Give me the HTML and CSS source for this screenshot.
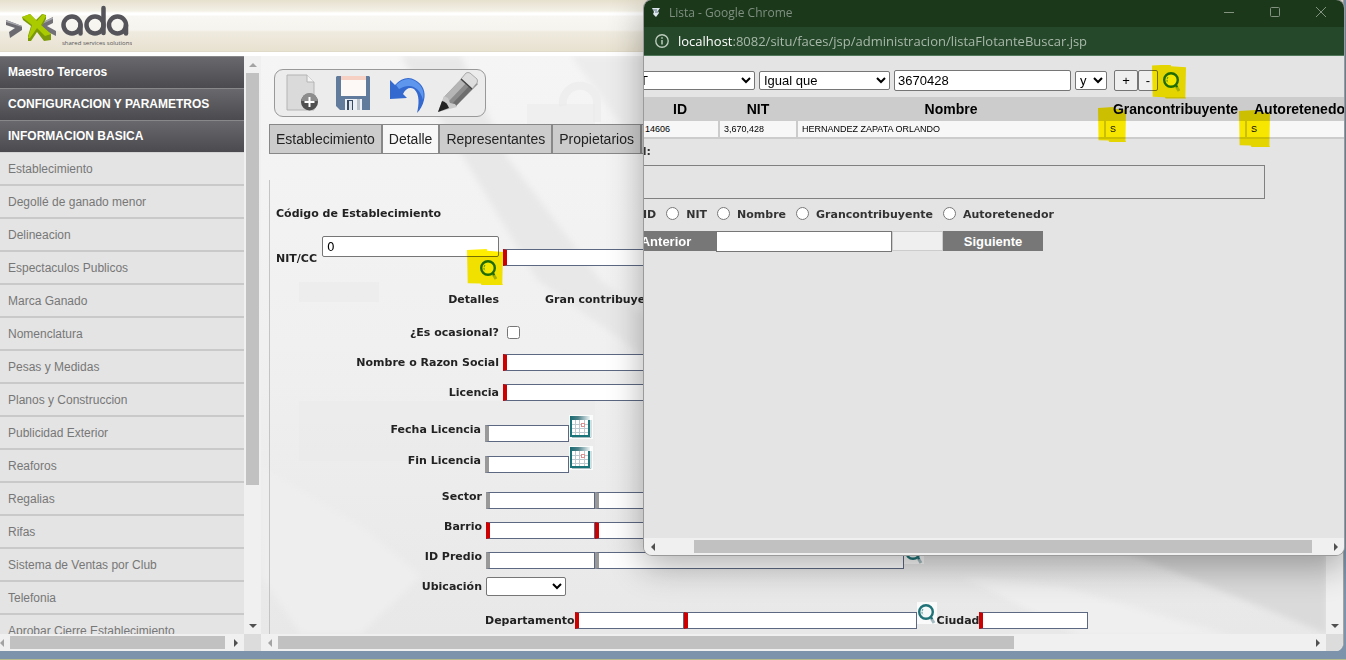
FILE: index.html
```
<!DOCTYPE html>
<html lang="es">
<head>
<meta charset="utf-8">
<title>Maestro Terceros</title>
<link rel="stylesheet" href="styles.css">
</head>
<body>
<svg class="defs" aria-hidden="true">
  <symbol id="search" viewBox="0 0 20 22">
    <path d="M14 16l3 5" stroke="#a4bcc0" stroke-width="3" fill="none"/>
    <circle cx="9" cy="10" r="6.8" fill="#f4f8f8" stroke="#1f7378" stroke-width="2.4"/>
    <path d="M6 7q-2 3 0 6" stroke="#6aa3a7" stroke-width="1.2" fill="none" stroke-dasharray="2 1"/>
    <path d="M13.500 15l2 2" stroke="#1f7378" stroke-width="2"/>
  </symbol>
  <symbol id="calendar" viewBox="0 0 24 24">
    <rect width="24" height="24" fill="#fafcfc"/>
    <path d="M1 2h21v20H1z" fill="#fff"/>
    <path d="M6.500 5v15M10.500 5v15M15.500 5v15M3 9.500h16M3 13.500h16M3 17.500h16" stroke="#bccad0" stroke-width="1"/>
    <path d="M2 3v18h18V4" fill="none" stroke="#197479" stroke-width="2"/>
    <path d="M3 22.500h19V5" fill="none" stroke="#a9bfc2"/>
    <rect x="1" y="1" width="20" height="4" fill="url(#calhead)"/>
    <rect x="12.500" y="8.500" width="3" height="3" fill="#fff" stroke="#e09090"/>
  </symbol>
  <linearGradient id="calhead"><stop offset="0" stop-color="#176a70"/><stop offset=".4" stop-color="#4c8088"/><stop offset="1" stop-color="#eef5f6"/></linearGradient>
</svg>
<div class="desktop">
  <div class="app">
    <header class="banner">
      <svg class="logo" width="132" height="48" viewBox="0 0 132 48" role="img" aria-label="ada shared services solutions">
        <path d="M6 20l16 6v4L10 38l-1-6 6-4-9-3z" fill="#6b6a71"/>
        <path d="M6 20l16 6v1L6 22z" fill="#a6a6ad"/>
        <path d="M53 17L39 24l1 4 16 8v-5l-9-5 6-3z" fill="#727178"/>
        <path d="M53 17L39 24l1 1 13-6z" fill="#a6a6ad"/>
        <path d="M22 17l8-3 6 6 6-6 4 1v4l-4 7 9 8v6l-7 1-7-9-6 9h-3v-5l3-10-8-6z" fill="#7c9a08"/>
        <path d="M22 17l8-3 7 7 6-7 3 2-5 9 10 9-6 2-8-8-7 10h-2l4-13z" fill="#a9cb00"/>
        <g fill="none" stroke="#55545a" stroke-width="4.500" stroke-linecap="round">
          <circle cx="72" cy="25" r="8.500"/><path d="M80.500 25v8.500"/>
          <circle cx="95" cy="25" r="8.500"/><path d="M103.500 8v25"/>
          <circle cx="117.500" cy="25" r="8.500"/><path d="M126 25v8.500"/>
        </g>
        <text x="62" y="45" font-size="6">shared services solutions</text>
      </svg>
    </header>
    <div class="workspace">
      <aside class="pane">
        <nav class="menu">
          <a class="head" href="#">Maestro Terceros</a>
          <a class="head" href="#">CONFIGURACION Y PARAMETROS</a>
          <a class="head" href="#">INFORMACION BASICA</a>
          <div class="items">
            <a class="item" href="#">Establecimiento</a>
            <a class="item" href="#">Degollé de ganado menor</a>
            <a class="item" href="#">Delineacion</a>
            <a class="item" href="#">Espectaculos Publicos</a>
            <a class="item" href="#">Marca Ganado</a>
            <a class="item" href="#">Nomenclatura</a>
            <a class="item" href="#">Pesas y Medidas</a>
            <a class="item" href="#">Planos y Construccion</a>
            <a class="item" href="#">Publicidad Exterior</a>
            <a class="item" href="#">Reaforos</a>
            <a class="item" href="#">Regalias</a>
            <a class="item" href="#">Rifas</a>
            <a class="item" href="#">Sistema de Ventas por Club</a>
            <a class="item" href="#">Telefonia</a>
            <a class="item" href="#">Aprobar Cierre Establecimiento</a>
          </div>
        </nav>
        <div class="vbar"><i class="arrow up dim"></i><b class="thumb side-v"></b><i class="arrow down"></i></div>
        <div class="hbar clipped"><i class="arrow left dim"></i><b class="thumb side-h"></b><i class="arrow right"></i></div>
        <div class="corner"></div>
      </aside>
      <section class="pane">
        <main class="content">
          <svg class="backdrop" viewBox="0 0 1065 578" preserveAspectRatio="none" aria-hidden="true">
            <defs>
              <filter id="soft"><feGaussianBlur stdDeviation="3"/></filter>
              <linearGradient id="base" x2="0" y2="1"><stop offset="0" stop-color="#f5f5f5"/><stop offset=".5" stop-color="#f0f0f0"/><stop offset="1" stop-color="#e8e8e8"/></linearGradient>
            </defs>
            <rect width="1065" height="578" fill="url(#base)"/>
            <g filter="url(#soft)">
              <path d="M140 0h60l46 101 93 123 50 40v40l-113-80-74-123z" fill="#e8e8e8"/>
              <path d="M310 0h80v110z" fill="#ececec"/>
              <path d="M0 410l100 60 60 50-60 58H40L0 520z" fill="#eeeeee"/>
              <path d="M850 490l216 88V480z" fill="#dadada"/>
              <path d="M700 520l100 10 170 50H820z" fill="#efefef"/>
            </g>
            <path d="M302 50a16 16 0 0 1 34-6v22" fill="none" stroke="#eeeeee" stroke-width="8"/>
            <path d="M38 226h80v20H38zM38 345h296v60H38zM266 48h68v22h-68z" fill="#eaeaea" fill-opacity=".5"/>
          </svg>
          <div class="tools">
            <button aria-label="Nuevo"><svg width="54" height="46" viewBox="0 0 54 46"><path d="M12 5h20l7 7v28H12z" fill="#dadada" stroke="#b4b4b4"/><path d="M32 5v7h7" fill="#f4f4f4" stroke="#b4b4b4"/><circle cx="34.500" cy="32" r="8.500" fill="#505050"/><path d="M26.500 31a8 8 0 0 1 16 0z" fill="#8d8d8d"/><path d="M34.500 27v10M29.500 32h10" stroke="#fff" stroke-width="2"/></svg></button>
            <button aria-label="Guardar"><svg width="54" height="46" viewBox="0 0 54 46"><path d="M8 6h32l1 1v33H11l-4-4V7z" fill="#617b9c"/><rect x="12" y="6" width="25" height="20" fill="#fdf9f7"/><path d="M12 6h25v4H12z" fill="#f6d0c2"/><rect x="16" y="29" width="17" height="11" fill="#eceff3"/><rect x="18" y="30" width="6" height="10" fill="#344a66"/><rect x="20" y="31" width="3" height="9" fill="#dfe4ea"/><path d="M29.500 29v11" stroke="#b8c0ca" stroke-width="3"/></svg></button>
            <button aria-label="Deshacer"><svg width="54" height="46" viewBox="0 0 54 46"><path d="M7 10l5 5C18 8 26 6 32 10c8 4 11 12 9 20-1 5-4 10-7 13 2-8 3-19-3-24-4-2-8-1-11 5l4 4-17 1z" fill="#3469cf"/><path d="M13 15C19 9 26 7 32 11c7 4 10 11 8 19C37 18 28 12 16 19z" fill="#5d96ec"/></svg></button>
            <button aria-label="Editar"><svg width="50" height="46" viewBox="0 0 50 46"><path d="M1 42l6-15 22-23 12 10-22 22z" fill="#8b8b8b"/><path d="M7 27L27 6l5 4-21 22z" fill="#b5b5b5"/><path d="M15 34l21-22 3 3-20 21z" fill="#6e6e6e"/><path d="M1 42l6-16 4 2 2 5 5 1 2 3z" fill="#c9c9c9"/><path d="M1 42l4-11q5 1 7 7z" fill="#222"/><path d="M24 9l5-6q2-1 4 0l7 6q1 2 0 4l-5 6z" fill="#dedede" stroke="#aaa"/><path d="M24 9l11 10" stroke="#444" stroke-width="1.500"/></svg></button>
          </div>
          <div class="tabs">
            <button>Establecimiento</button><button class="on">Detalle</button><button>Representantes</button><button>Propietarios</button><button class="more" aria-label="Más"></button>
          </div>
          <form class="form">
            <div class="row code"><label for="cod">Código de Establecimiento</label></div>
            <div class="row nit">
              <label for="nit">NIT/CC</label>
              <input id="cod" class="plain" value="0">
              <input id="nit" class="field must long">
              <button type="button" class="lookup" aria-label="Buscar"><svg width="20" height="22"><use href="#search"/></svg><span class="mark"></span></button>
            </div>
            <div class="row mid"><span class="cap">Detalles</span><span class="next">Gran contribuyente</span></div>
            <div class="row mid check"><label class="cap" for="oc">¿Es ocasional?</label><input id="oc" type="checkbox"></div>
            <div class="row mid"><label class="cap" for="nom">Nombre o Razon Social</label><input id="nom" class="field must long"></div>
            <div class="row mid"><label class="cap" for="lic">Licencia</label><input id="lic" class="field must long"></div>
            <div class="dates">
              <div class="row date"><label class="cap" for="fl">Fecha Licencia</label><input id="fl" class="field short"><button type="button" class="icon" aria-label="Calendario"><svg width="24" height="24"><use href="#calendar"/></svg></button></div>
              <div class="row date"><label class="cap" for="ff">Fin Licencia</label><input id="ff" class="field short"><button type="button" class="icon" aria-label="Calendario"><svg width="24" height="24"><use href="#calendar"/></svg></button></div>
            </div>
            <div class="row"><label class="cap" for="se">Sector</label><input id="se" class="field key"><input aria-label="Sector" class="field desc"></div>
            <div class="row"><label class="cap" for="ba">Barrio</label><input id="ba" class="field key must"><input aria-label="Barrio" class="field desc must"></div>
            <div class="row"><label class="cap" for="pr">ID Predio</label><input id="pr" class="field key"><input aria-label="ID Predio" class="field desc"><button type="button" class="icon" aria-label="Buscar"><svg width="20" height="22"><use href="#search"/></svg></button></div>
            <div class="row"><label class="cap" for="ub">Ubicación</label><select id="ub"><option></option></select></div>
            <div class="row place"><label for="de">Departamento</label><input id="de" class="field key must"><input aria-label="Departamento" class="field name must"><button type="button" class="icon" aria-label="Buscar"><svg width="20" height="22"><use href="#search"/></svg></button><label for="ci">Ciudad</label><input id="ci" class="field key must"></div>
          </form>
        </main>
        <div class="vbar"><i class="arrow up"></i><i class="arrow down"></i></div>
        <div class="hbar"><i class="arrow left dim"></i><b class="thumb main-h"></b><i class="arrow right"></i></div>
        <div class="corner"></div>
      </section>
    </div>
  </div>

  <div class="popup">
    <div class="titlebar">
      <svg width="10" height="11" viewBox="0 0 10 11"><path d="M1 1h8l-2 3 1 2-3 4-3-3 1-2z" fill="#dfe7ee"/><path d="M2 3h4M4 5h3" stroke="#5c6f80"/></svg>
      <span>Lista - Google Chrome</span>
      <button aria-label="Minimizar"><svg width="12" height="12"><path d="M1 6.500h10" stroke="#82937f"/></svg></button>
      <button aria-label="Maximizar"><svg width="12" height="12"><rect x="1.500" y="1.500" width="9" height="9" rx="1" fill="none" stroke="#82937f"/></svg></button>
      <button aria-label="Cerrar"><svg width="12" height="12"><path d="M1 1l10 10M11 1L1 11" stroke="#82937f"/></svg></button>
    </div>
    <div class="address">
      <svg width="14" height="14" viewBox="0 0 14 14"><circle cx="7" cy="7" r="6.200" fill="none" stroke="#bccbbd" stroke-width="1.400"/><path d="M7 6v4.500M7 3.300v1.500" stroke="#bccbbd" stroke-width="1.500"/></svg>
      <span><b>localhost</b>:8082/situ/faces/jsp/administracion/listaFlotanteBuscar.jsp</span>
    </div>
    <div class="list">
      <div class="scrolled">
        <div class="filter">
          <select class="by" aria-label="Campo"><option>NIT</option></select>
          <select class="op" aria-label="Operador"><option>Igual que</option></select>
          <input aria-label="Valor" value="3670428">
          <select class="and" aria-label="Conector"><option>y</option></select>
          <span class="pm"><button>+</button><button>-</button></span>
          <button class="lookup" aria-label="Buscar"><svg width="20" height="22"><use href="#search"/></svg><span class="mark"></span></button>
        </div>
        <table>
          <colgroup><col class="c1"><col class="c1"><col class="c3"><col class="c4"><col class="c5"></colgroup>
          <thead><tr><th>ID</th><th>NIT</th><th>Nombre</th><th>Grancontribuyente</th><th>Autoretenedor</th></tr></thead>
          <tbody><tr><td>14606</td><td>3,670,428</td><td>HERNANDEZ ZAPATA ORLANDO</td><td>S<span class="mark"></span></td><td>S<span class="mark"></span></td></tr></tbody>
        </table>
        <p class="total">Total:</p>
        <div class="box"></div>
        <div class="order">
          <label><input type="radio" name="o">ID</label>
          <label><input type="radio" name="o">NIT</label>
          <label><input type="radio" name="o">Nombre</label>
          <label><input type="radio" name="o">Grancontribuyente</label>
          <label><input type="radio" name="o">Autoretenedor</label>
        </div>
        <div class="pager"><button class="go">Anterior</button><input aria-label="Página"><button class="blank" disabled aria-label="Ir"></button><button class="go">Siguiente</button></div>
      </div>
    </div>
    <div class="hbar"><i class="arrow left"></i><b class="thumb pop-h"></b><i class="arrow right"></i></div>
  </div>
</div>
</body>
</html>
```
FILE: styles.css
```
* { box-sizing: border-box; }
body { margin: 0; font-family: "Liberation Sans", Arial, sans-serif; overflow: hidden; }
button, input, select { font-family: inherit; margin: 0; }
button { padding: 0; border: 0; background: none; }
svg { display: block; }
.defs { position: absolute; width: 0; height: 0; }

.desktop { position: relative; height: 100vh; padding: 0 2px 8px 0; background: linear-gradient(#8fa6c0 0, #8fa6c0 45px, #e4e4e4 48px, #e4e4e4 330px, #777 336px, #777 630px, #7c93ab 632px); border-bottom: 1px solid #b5bb8c; display: flex; flex-direction: column; }
.app { flex: 1; min-height: 0; display: flex; flex-direction: column; background: #fff; border-right: 1px solid #a5a5a5; border-radius: 0 0 8px 0; overflow: hidden; box-shadow: 0 1px 0 8px #7c93ab; clip-path: inset(0 -2px -8px 0); }
.banner { height: 56px; flex: none; border-bottom: 4px solid #fff; background: linear-gradient(#e6e0ce 0, #f3f0e6 11px, #fff 13px, #fff 15px, #f8f7f3 16px, #f6f4ee 30px, #efebdf 32px, #e7e1d0 51px, #d9d3c3 52px); }
.logo { font-family: "Open Sans", sans-serif; fill: #555459; }
.workspace { flex: 1; min-height: 0; display: grid; grid-template-columns: 261px 1fr; }
.pane { display: grid; grid-template: minmax(0, 1fr) 17px / minmax(0, 1fr) 17px; min-width: 0; min-height: 0; }

.menu { overflow: hidden; background: #e4e4e4; font-size: 12px; }
.menu a { display: block; padding-left: 8px; text-decoration: none; }
.head { height: 32px; line-height: 31px; color: #fff; font-weight: bold; background: linear-gradient(#69696d, #4b4b4f); border-top: 1px solid #88888b; }
.items { border-top: 1px solid #d4d4d4; }
.item { height: 33px; line-height: 33px; color: #777; border-bottom: 2px solid #c9c9c9; }

.vbar, .hbar { display: flex; background: #f0f0f0; align-items: center; }
.vbar { flex-direction: column; }
.arrow { width: 17px; height: 17px; flex: none; display: flex; align-items: center; justify-content: center; }
.arrow::before { content: ""; border: 4px solid transparent; }
.up::before { border-bottom: 4px solid #505050; border-top: 0; }
.down::before { border-top: 4px solid #505050; border-bottom: 0; }
.left::before { border-right: 4px solid #505050; border-left: 0; }
.right::before { border-left: 4px solid #505050; border-right: 0; }
.up.dim::before { border-bottom-color: #a3a3a3; }
.left.dim::before { border-right-color: #a3a3a3; }
.vbar .down { margin-top: auto; }
.hbar .right { margin-left: auto; }
.thumb { display: block; background: #c1c1c1; }
.vbar .thumb { width: 13px; }
.hbar .thumb { height: 13px; }
.side-v { height: 412px; }
.side-h { width: 88%; }
.main-h { width: 736px; }
.clipped { overflow: hidden; }
.clipped .left { margin-left: -7px; }
.corner { background: #dcdcdc; }

.content { position: relative; overflow: hidden; padding: 13px 0 0 8px; font: bold 11px/16px "DejaVu Sans", Verdana, sans-serif; color: #222; }
.backdrop { position: absolute; inset: 0; width: 100%; height: 100%; z-index: -1; }
.content, .popup { isolation: isolate; }
.tools { display: flex; width: 212px; height: 48px; margin: 0 0 7px 5px; border: 1px solid #999; border-radius: 9px; overflow: hidden; background: #ececec; }
.tools button { flex: none; }
.tabs { display: flex; height: 30px; margin-bottom: 26px; }
.tabs button { height: 30px; padding: 0 6px; border: 1px solid #888; background: #ccc; font: 14px "Liberation Sans", Arial, sans-serif; color: #222; }
.tabs .on { background: #f7f7f7; }
.tabs .more { width: 90px; }
.form { height: 600px; border-left: 1px solid #c4c4c4; padding-left: 6px; }
.row { display: flex; align-items: flex-start; height: 30px; }
.code { height: 56px; padding-top: 26px; }
.nit { position: relative; height: 48px; }
.nit label { padding-top: 15px; width: 46px; }
.plain { width: 177px; height: 21px; border: 1px solid #767676; border-radius: 2px; padding: 0 4px; font-size: 12px; margin-right: 4px; }
.field { height: 17px; border: 1px solid #5c6882; border-left: 4px solid #999; margin-top: 10px; padding: 0 2px; background: #fff; }
.must { border-left-color: #c00; }
.nit .field { margin-top: 13px; }
.long { width: 400px; }
.short { width: 84px; }
.key { width: 109px; }
.desc { width: 309px; }
.name { width: 233px; }
.cap { width: 206px; padding-top: 7px; margin-right: 4px; text-align: right; }
.mid { align-items: center; }
.mid .cap { padding: 1px 0 0; width: 223px; }
.mid .field { margin-top: 0; }
.next { margin-left: 42px; padding-top: 1px; }
.check { margin-top: 3px; }
.check input { width: 13px; height: 13px; margin-left: 4px; }
.dates { margin: 8px 0 5px; }
.date { height: 31px; }
.date .cap { width: 205px; }
.row select { width: 80px; height: 19px; margin-top: 5px; background: #fff; border: 1px solid #767676; border-radius: 2px; }
.place { padding-left: 209px; }
.place label { padding-top: 11px; }
.icon { background: #fafafa; }
.lookup { position: relative; }
.nit .lookup { position: absolute; left: 203px; top: 22px; }
.mark { position: absolute; background: #ffee00; mix-blend-mode: multiply; clip-path: polygon(0 3%, 55% 0, 56% 5%, 100% 8%, 98% 96%, 100% 100%, 40% 100%, 38% 96%, 2% 95%); }
.nit .mark { left: -12px; top: -9px; width: 36px; height: 36px; }

.popup { position: absolute; top: 0; left: 644px; right: 2px; height: 555px; display: flex; flex-direction: column; border-radius: 8px; overflow: hidden; background: #e4e4e4; box-shadow: 0 0 0 1px #9a9a9a, 0 10px 34px 2px rgba(0,0,0,.3); }
.titlebar { height: 27px; flex: none; background: #1b381b; display: flex; align-items: center; padding: 0 17px 3px 7px; font: 12px "Open Sans", sans-serif; color: #7f9080; }
.titlebar span { margin: 0 auto 0 8px; }
.titlebar button { margin-left: 34px; }
.address { height: 29px; flex: none; background: #26482a; border-bottom: 1px solid #51775a; display: flex; align-items: center; gap: 9px; padding: 0 11px; font: 13px "Open Sans", sans-serif; color: #a8b8a9; }
.address b { font-weight: normal; color: #fff; }
.list { flex: 1; min-height: 0; overflow: hidden; }
.scrolled { margin-left: -28px; padding-top: 14px; }
.filter { display: flex; align-items: center; height: 21px; padding-left: 6px; margin-bottom: 6px; }
.filter select, .filter input { font-size: 13px; border: 1px solid #767676; border-radius: 2px; background: #fff; color: #000; flex: none; }
.filter select { height: 19px; }
.by { width: 133px; }
.op { width: 131px; margin: 0 4px; }
.filter input { width: 177px; height: 21px; padding: 0 3px; margin-right: 4px; }
.and { width: 32px; }
.pm { display: flex; margin: 0 4px 0 7px; }
.pm button { width: 24px; height: 21px; border: 1px solid #767676; border-radius: 2px; background: #efefef; font-size: 13px; }
.pm button + button { width: 20px; }
.filter .mark { left: -10px; top: -5px; width: 34px; height: 34px; }
table { width: 740px; margin-left: 25px; table-layout: fixed; border-collapse: collapse; background: #ccc; }
.c1 { width: 78px; } .c3 { width: 308px; } .c4 { width: 141px; } .c5 { width: 135px; }
th { height: 24px; padding: 0; font-size: 14px; white-space: nowrap; color: #000; }
th:last-child { text-align: left; padding-left: 8px; }
td { position: relative; height: 17px; padding: 0 4px 1px; font-size: 9px; color: #000; background: #f7f7f7; border: solid #ccc; border-width: 0 2px 2px 0; }
td .mark { left: -8px; top: -14px; width: 28px; height: 35px; }
td:last-child .mark { top: -11px; height: 37px; width: 31px; }
.total, .order { font: bold 11px/14px "DejaVu Sans", Verdana, sans-serif; color: #333; }
.total { margin: 6px 0; text-align: right; width: 35px; }
.box { height: 34px; width: 649px; border: 1px solid #808080; }
.order { display: flex; align-items: center; height: 32px; gap: 9px; padding-left: 7px; }
.order label { display: flex; align-items: center; gap: 7px; }
.order input { width: 13px; height: 13px; margin-bottom: 4px; }
.order label + label { margin-left: 1px; }
.pager { display: flex; }
.pager input { width: 176px; height: 21px; border: 1px solid #767676; }
.go { width: 100px; height: 20px; background: #777; color: #fff; font-weight: bold; font-size: 13px; }
.blank { width: 51px; height: 20px; border: 1px solid #ccc; background: #efefef; }
.popup > .hbar { height: 17px; flex: none; }
.pop-h { width: 618px; margin-left: 33px; }
```
